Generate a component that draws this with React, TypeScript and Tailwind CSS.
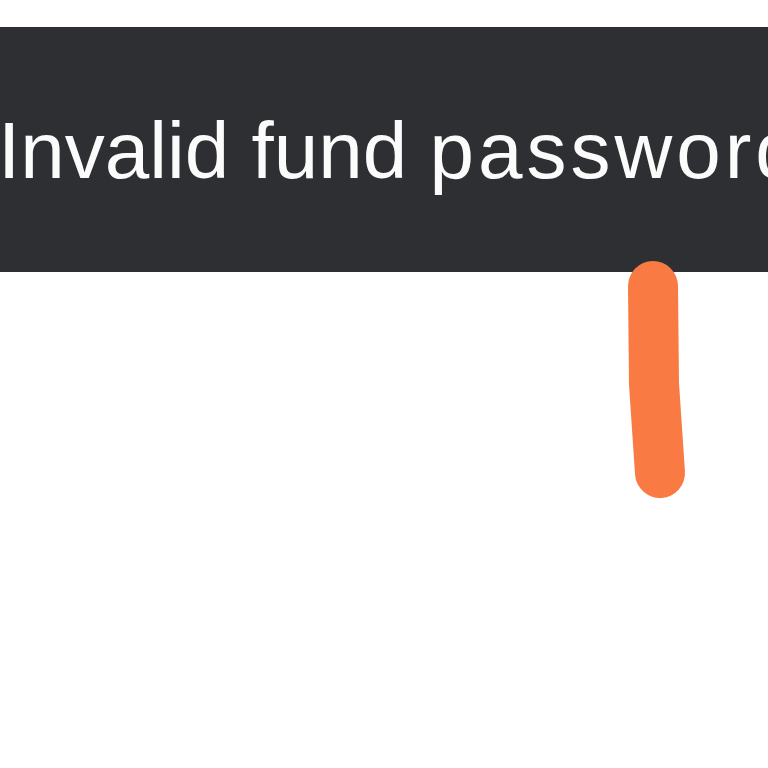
export default function App() {
  return (
    <div className="relative h-[768px] w-[768px] overflow-hidden bg-white">
      <div className="pt-[27px]">
        <div className="h-[245px] overflow-hidden whitespace-nowrap bg-[#2e2f33] pt-[84px]">
          <p className="ml-[-2px] font-['Liberation_Sans',Arial,sans-serif] text-[80px] leading-none text-[#fbfbfb]">
            Invalid fund <span className="tracking-[4px]">password</span>
          </p>
        </div>
      </div>

      {/* marker stroke drawn over the toast */}
      <svg
        className="pointer-events-none absolute left-0 top-0"
        width="768"
        height="768"
        viewBox="0 0 768 768"
      >
        <path
          d="M653 286 L654 384 L660 473"
          fill="none"
          stroke="#f97b43"
          strokeWidth="50"
          strokeLinecap="round"
          strokeLinejoin="round"
        />
      </svg>
    </div>
  );
}
